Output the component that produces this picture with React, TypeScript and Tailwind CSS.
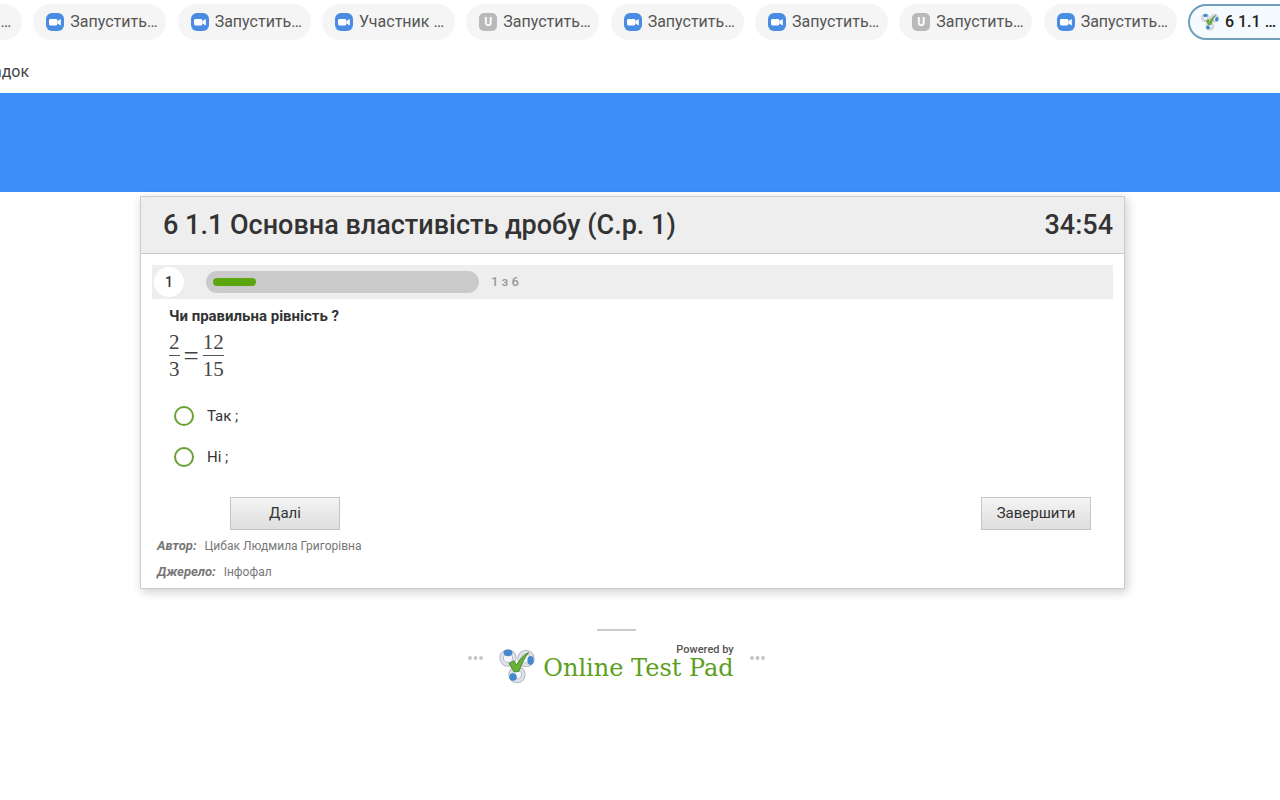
import React, { useState } from "react";

type Tab = { title: string; icon: "zoom" | "letter" };

const tabs: Tab[] = [
  { title: "Участник …", icon: "zoom" },
  { title: "Запустить…", icon: "zoom" },
  { title: "Запустить…", icon: "zoom" },
  { title: "Участник …", icon: "zoom" },
  { title: "Запустить…", icon: "letter" },
  { title: "Запустить…", icon: "zoom" },
  { title: "Запустить…", icon: "zoom" },
  { title: "Запустить…", icon: "letter" },
  { title: "Запустить…", icon: "zoom" },
];

const answers = ["Так ;", "Ні ;"];

const ZoomIcon = () => (
  <svg viewBox="0 0 18 18" className="h-[18px] w-[18px] shrink-0">
    <rect width="18" height="18" rx="6" fill="#4a8ce2" />
    <rect x="3" y="6" width="8.4" height="6.5" rx="1.4" fill="#fff" />
    <path d="M11.4 8.1 14.8 6.1v6.4l-3.4-2z" fill="#fff" />
  </svg>
);

const LetterIcon = () => (
  <span className="flex h-[18px] w-[18px] shrink-0 items-center justify-center rounded-[5px] bg-[#b9b9b9] text-xs font-bold text-white">
    U
  </span>
);

const PadLogo = ({ className }: { className: string }) => (
  <svg viewBox="0 0 36 36" className={className}>
    <g fill="#f4f6fa" stroke="#b9bcc6" strokeWidth="4.6">
      <circle cx="9" cy="10" r="6.4" />
      <circle cx="27" cy="10.5" r="6.4" />
      <circle cx="18" cy="26.5" r="6.4" />
    </g>
    <g fill="none" stroke="#dfe2e9" strokeWidth="2.6">
      <circle cx="9" cy="10" r="6.4" />
      <circle cx="27" cy="10.5" r="6.4" />
      <circle cx="18" cy="26.5" r="6.4" />
    </g>
    <g fill="#4588cc">
      <ellipse cx="9" cy="4.8" rx="4.4" ry="3.4" />
      <ellipse cx="31.6" cy="12.5" rx="3.2" ry="4.4" />
      <ellipse cx="14" cy="29" rx="3.8" ry="3.8" />
    </g>
    <path
      d="M10 15.5 15 12.8 17.6 17C20.2 11.8 23.8 7.8 29.6 4.5c-3.8 5-7 11-9.6 18.9L15.2 24z"
      fill="#69b23a"
      stroke="#47852c"
      strokeWidth="0.9"
    />
  </svg>
);

const Dots = () => (
  <svg viewBox="0 0 15 4" className="mt-3 h-1 w-[15px]" fill="#c4c4c4">
    <circle cx="2" cy="2" r="1.9" />
    <circle cx="7.5" cy="2" r="1.9" />
    <circle cx="13" cy="2" r="1.9" />
  </svg>
);

const Fraction = ({ top, bottom }: { top: string; bottom: string }) => (
  <span className="flex flex-col items-center">
    <span className="border-b border-[#555] pb-1">{top}</span>
    <span className="pt-1">{bottom}</span>
  </span>
);

const TabBar = () => (
  <nav className="overflow-hidden pt-1">
    <div className="-mr-[41px] -ml-[111px] flex justify-between">
      {tabs.map((tab, i) => (
        <button
          key={i}
          className="flex h-9 w-[133px] shrink-0 items-center gap-1.5 rounded-full bg-[#f5f5f5] pl-[13px] text-base whitespace-nowrap text-[#555]"
        >
          {tab.icon === "zoom" ? <ZoomIcon /> : <LetterIcon />}
          {tab.title}
        </button>
      ))}
      <button className="flex h-9 w-[133px] shrink-0 items-center gap-1.5 rounded-full border-2 border-[#6f9fba] bg-[#f4fafd] pl-[11px] text-base font-medium whitespace-nowrap text-[#222]">
        <PadLogo className="h-[18px] w-[18px] shrink-0" />6 1.1 …
      </button>
    </div>
  </nav>
);

const App = () => {
  const [answer, setAnswer] = useState("");

  return (
    <div className="min-h-screen bg-white font-[Roboto,sans-serif] text-[#333]">
      <TabBar />
      <div className="flex h-[53px] items-center overflow-hidden pt-2.5">
        <a href="#" className="-ml-[7px] text-base text-[#444]">
          адок
        </a>
      </div>
      <div className="h-[99px] bg-[#3e8ef7]" />

      <div className="pt-1 pr-[15px]">
        <main className="mx-auto max-w-[985px] border border-[#ccc] bg-white shadow-[2px_3px_10px_rgba(0,0,0,0.2)]">
          <header className="flex h-[57px] items-center justify-between border-b border-[#c8c8c8] bg-[#eee] pr-[11px] pl-[22px] text-[27px] font-medium">
            <h1>6 1.1 Основна властивість дробу (С.р. 1)</h1>
            <time>34:54</time>
          </header>

          <div className="mx-[11px] mt-[11px] flex h-[34px] items-center bg-[#eee] pl-0.5">
            <span className="flex h-[30px] w-[30px] items-center justify-center rounded-full bg-white text-sm font-medium">
              1
            </span>
            <div className="ml-[22px] h-[22px] w-[273px] rounded-full bg-[#cacaca] p-[7px]">
              <div className="h-2 w-1/6 rounded-full bg-[#5ba50f]" />
            </div>
            <span className="ml-3 text-[13px] font-medium text-[#999]">
              1 з 6
            </span>
          </div>

          <section className="pl-7">
            <h2 className="mt-[7px] text-[15px] leading-5 font-bold">
              Чи правильна рівність ?
            </h2>
            <div className="mt-[7px] flex items-center gap-1 font-['Liberation_Serif',serif] text-[21px] leading-[18px] text-[#444]">
              <Fraction top="2" bottom="3" />
              <span className="text-[27px]">=</span>
              <Fraction top="12" bottom="15" />
            </div>
            <div className="mt-[26px] flex flex-col gap-[17px] pl-[5px]">
              {answers.map((text) => (
                <label
                  key={text}
                  className="flex h-6 items-center gap-[13px] text-[15px]"
                >
                  <input
                    type="radio"
                    name="answer"
                    value={text}
                    checked={answer === text}
                    onChange={() => setAnswer(text)}
                    className="h-5 w-5 appearance-none rounded-full border-2 border-[#6ba032] checked:bg-[#6ba032]"
                  />
                  {text}
                </label>
              ))}
            </div>
          </section>

          <div className="mt-7 flex justify-between pr-[33px] pl-[89px] text-[15px]">
            <button className="h-[33px] w-[110px] border border-[#c4c4c4] bg-linear-to-b from-[#f4f4f4] to-[#dedede]">
              Далі
            </button>
            <button className="h-[33px] w-[110px] border border-[#c4c4c4] bg-linear-to-b from-[#f4f4f4] to-[#dedede]">
              Завершити
            </button>
          </div>

          <div className="flex flex-col gap-1.5 py-1.5 pl-4 text-[#777]">
            <p className="flex items-center gap-2 text-xs leading-5">
              <b className="text-[13px] italic">Автор:</b>
              Цибак Людмила Григорівна
            </p>
            <p className="flex items-center gap-2 text-xs leading-5">
              <b className="text-[13px] italic">Джерело:</b>
              Інфофал
            </p>
          </div>
        </main>

        <footer className="flex flex-col items-center pt-10 pr-8">
          <div className="h-0.5 w-[39px] bg-[#ccc]" />
          <div className="mt-[13px] flex gap-4">
            <Dots />
            <a href="#" className="flex items-start gap-2">
              <PadLogo className="mt-1 h-9 w-9" />
              <span className="flex flex-col">
                <span className="self-end text-[11px] leading-3 font-medium text-[#555]">
                  Powered by
                </span>
                <span className="font-['DejaVu_Serif',serif] text-2xl leading-6 text-[#5ba01c]">
                  Online Test Pad
                </span>
              </span>
            </a>
            <Dots />
          </div>
        </footer>
      </div>
    </div>
  );
};

export default App;
